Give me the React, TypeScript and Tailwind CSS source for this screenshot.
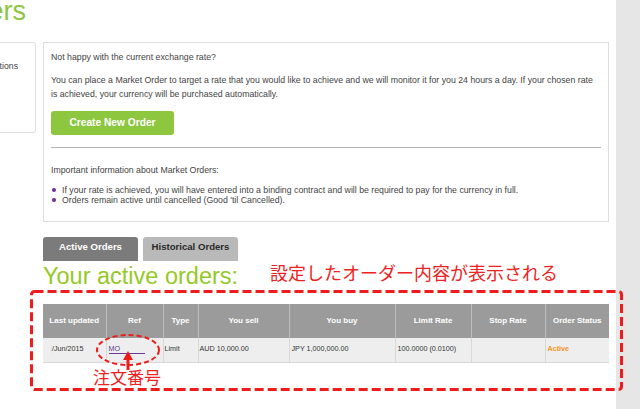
export default function App() {
  const cols = [
    { label: 'Last updated', w: 'w-[63px]' },
    { label: 'Ref', w: 'w-[57px]' },
    { label: 'Type', w: 'w-[35px]' },
    { label: 'You sell', w: 'w-[91px]' },
    { label: 'You buy', w: 'w-[106px]' },
    { label: 'Limit Rate', w: 'w-[76px]' },
    { label: 'Stop Rate', w: 'w-[74px]' },
    { label: 'Order Status', w: 'w-[64px]' },
  ];

  return (
    <div className="relative flex w-[640px] h-[409px] overflow-hidden bg-white font-['Liberation_Sans',Arial,sans-serif] text-[#444]">
      <div className="w-[616px] h-full overflow-hidden">
        <div className="-ml-[70px] w-[686px]">
          {/* page title, cut off on the left */}
          <div className="w-[96px] h-[42px] flex justify-end">
            <span className="whitespace-nowrap text-[27px] leading-[22px] text-[#8dc63f]">Market Orders</span>
          </div>

          <div className="flex gap-[7px] items-start">
            {/* side nav */}
            <div className="w-[106px] h-[91px] border border-[#ddd] rounded-[3px] pt-[17px] pr-[17px] flex justify-end">
              <span className="whitespace-nowrap text-[8.75px] leading-[12px] text-[#444] h-[12px]">Transactions</span>
            </div>

            <div className="w-[566px]">
              {/* info box */}
              <div className="border border-[#ddd] h-[180px] px-[7px] text-[8.75px]">
                <p className="mt-[8px] leading-[12px]">Not happy with the current exchange rate?</p>
                <p className="mt-[10px] leading-[14px]">
                  You can place a Market Order to target a rate that you would like to achieve and we will monitor it for you 24 hours a day. If your chosen rate is achieved, your currency will be purchased automatically.
                </p>
                <button className="mt-[10px] w-[123px] h-[24px] rounded-[3px] bg-[#8dc63f] text-white font-bold text-[10.2px] leading-[24px] text-center">
                  Create New Order
                </button>
                <div className="mt-[12px] border-t border-[#b3b3b3]" />
                <p className="mt-[16px] leading-[12px]">Important information about Market Orders:</p>
                <ul className="mt-[9px]">
                  <li className="flex items-center h-[10px] leading-[10px]">
                    <span className="ml-[1px] w-[4px] h-[4px] rounded-full bg-[#6d2c8e]" />
                    <span className="ml-[6px]">If your rate is achieved, you will have entered into a binding contract and will be required to pay for the currency in full.</span>
                  </li>
                  <li className="flex items-center h-[10px] leading-[10px]">
                    <span className="ml-[1px] w-[4px] h-[4px] rounded-full bg-[#6d2c8e]" />
                    <span className="ml-[6px]">Orders remain active until cancelled (Good 'til Cancelled).</span>
                  </li>
                </ul>
              </div>

              {/* tabs */}
              <div className="mt-[15px] flex gap-[5px]">
                <div className="w-[95px] h-[24px] rounded-t-[3px] bg-[#7b7b7b] text-white font-bold text-[9.6px] leading-[12px] pt-[4px] text-center">
                  Active Orders
                </div>
                <div className="w-[95px] h-[24px] rounded-t-[3px] bg-[#b9b9b9] text-[#2a2a2a] font-bold text-[9.6px] leading-[12px] pt-[4px] text-center">
                  Historical Orders
                </div>
              </div>

              {/* heading */}
              <div className="flex items-start h-[30px]">
                <span className="w-[227px] whitespace-nowrap text-[23.5px] leading-[30px] text-[#95c926]">Your active orders:</span>
                <span className="mt-[1px] whitespace-nowrap text-[18px] leading-[20px] text-[#ee2222] font-['Noto_Sans_CJK_JP',sans-serif]">
                  設定したオーダー内容が表示される
                </span>
              </div>

              {/* orders table */}
              <table className="mt-[13px] w-[566px] border-collapse table-fixed">
                <thead>
                  <tr className="h-[34px] bg-[#9b9b9b]">
                    {cols.map((c, i) => (
                      <th
                        key={c.label}
                        className={`${c.w} p-0 text-center text-white font-bold text-[8px] ${i > 0 ? 'border-l border-[#bdbdbd]' : ''}`}
                      >
                        {c.label}
                      </th>
                    ))}
                  </tr>
                </thead>
                <tbody>
                  <tr className="h-[24px] bg-[#eeeeee] text-[7.2px] text-[#333] border-b border-[#d8d8d8]">
                    <td className="pl-[8px]">
                      <span className="inline-block w-[1px] h-[8px] bg-[#e2e2e2] align-middle" />/Jun/2015
                    </td>
                    <td className="pl-[2px] border-l border-[#d8d8d8]">
                      <span className="inline-block w-[36px] border-b border-[#6d3c9a] text-[#5b3a8c] leading-[9px]">MO</span>
                    </td>
                    <td className="pl-[1px] border-l border-[#d8d8d8]">Limit</td>
                    <td className="pl-[1px] border-l border-[#d8d8d8]">AUD 10,000.00</td>
                    <td className="pl-[2px] border-l border-[#d8d8d8]">JPY 1,000,000.00</td>
                    <td className="pl-[2px] border-l border-[#d8d8d8]">100.0000 (0.0100)</td>
                    <td className="pl-[2px] border-l border-[#d8d8d8]"></td>
                    <td className="pl-[2px] border-l border-[#d8d8d8] font-bold text-[#f7931e]">Active</td>
                  </tr>
                </tbody>
              </table>
            </div>
          </div>
        </div>
      </div>

      <div className="flex-1 bg-[#e6e6e6]" />

      {/* red annotations drawn over the screenshot */}
      <svg className="absolute inset-0 pointer-events-none" width="640" height="409" viewBox="0 0 640 409">
        <rect x="31.5" y="291.5" width="590" height="98" rx="3" fill="none" stroke="#ee1c1c" strokeWidth="3" strokeDasharray="9 4" />
        <ellipse cx="128" cy="350" rx="31" ry="15" fill="none" stroke="#ee1c1c" strokeWidth="2" strokeDasharray="5 3" />
        <line x1="128" y1="370" x2="128" y2="358" stroke="#ee1c1c" strokeWidth="3" />
        <polygon points="128,351 123,360 133,360" fill="#ee1c1c" />
      </svg>
      <div className="absolute left-[93px] top-[368px] text-[17px] leading-[17px] text-[#ee2222] font-['Noto_Sans_CJK_JP',sans-serif] whitespace-nowrap">
        注文番号
      </div>
    </div>
  );
}
